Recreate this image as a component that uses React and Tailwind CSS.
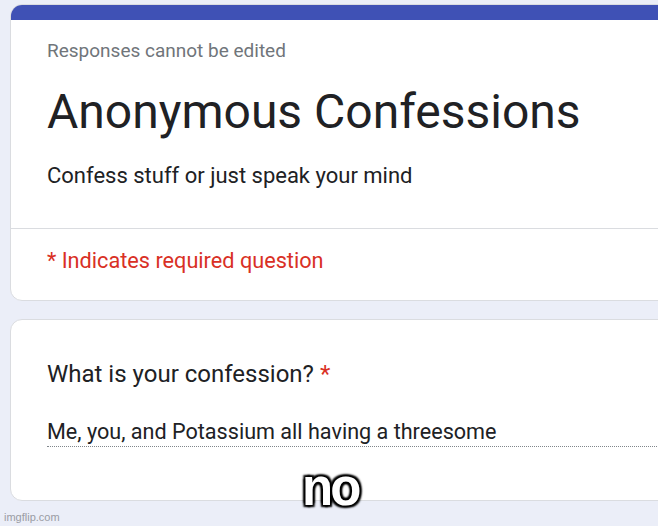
export default function App() {
  return (
    <div className="relative h-[526px] w-[658px] overflow-hidden bg-[#ebeef8] font-['Roboto',sans-serif]">
      <div className="pt-[4px] pl-[10px]">
        <div className="w-[700px] overflow-hidden rounded-[12px] border border-[#dadce0] bg-white">
          <div className="-mt-px h-[16px] bg-[#3f51b5]" />
          <div className="pl-[36px] pt-[19px]">
            <div className="h-[24px] text-[19px] leading-[24px] text-[#70757a]">Responses cannot be edited</div>
            <div className="mt-[21px] h-[56px] text-[48px] leading-[56px] text-[#202124]">Anonymous Confessions</div>
            <div className="mt-[23px] h-[26px] text-[22px] leading-[26px] text-[#202124]">Confess stuff or just speak your mind</div>
          </div>
          <div className="mt-[39px] h-px bg-[#dadce0]" />
          <div className="pl-[36px] pt-[19px] pb-[26px]">
            <div className="h-[26px] text-[21.7px] leading-[26px] text-[#d93025]">* Indicates required question</div>
          </div>
        </div>
        <div className="mt-[18px] w-[700px] rounded-[12px] border border-[#dadce0] bg-white pl-[36px] pt-[40px] pb-[53px]">
          <div className="h-[28px] text-[24px] leading-[28px] text-[#202124]">
            What is your confession? <span className="text-[#d93025]">*</span>
          </div>
          <div className="mt-[31px] border-b border-dotted border-[#80868b] pb-px">
            <div className="h-[26px] text-[21.6px] leading-[26px] text-[#202124]">Me, you, and Potassium all having a threesome</div>
          </div>
        </div>
      </div>
      <div className="pl-[4px] pt-[9px] font-['Liberation_Sans',sans-serif] text-[11px] leading-[14px] text-[#9a9ca4]">imgflip.com</div>
      <div className="absolute left-[302px] top-[456px] font-['Liberation_Sans',sans-serif] text-[51px] font-bold leading-[64px] tracking-[-3px] text-white [text-shadow:0_0_3px_#000,0_0_3px_#000,2px_2px_2px_#000,-2px_-2px_2px_#000,2px_-2px_2px_#000,-2px_2px_2px_#000]">
        no
      </div>
    </div>
  );
}
